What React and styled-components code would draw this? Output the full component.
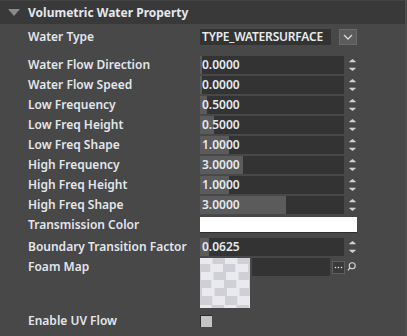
import React from "react";
import styled, { createGlobalStyle } from "styled-components";

const Global = createGlobalStyle`
  html, body { margin: 0; padding: 0; background: #484848; }
  body { font-family: "Noto Sans", "DejaVu Sans", sans-serif; }
`;

const Panel = styled.div`
  width: 407px;
  height: 336px;
  background: #484848;
  box-sizing: border-box;
  border-right: 2px solid #4e4e4e;
  overflow: hidden;
`;

const Header = styled.div`
  height: 24px;
  background: #393939;
  border-top: 1px solid #444;
  box-sizing: border-box;
  display: flex;
  align-items: center;
  gap: 8px;
  padding-left: 8px;
  padding-bottom: 1px;
  color: #e4e8ee;
  font-size: 12px;
  font-weight: 700;
`;

const Triangle = styled.span`
  width: 0;
  height: 0;
  border-left: 6px solid transparent;
  border-right: 6px solid transparent;
  border-top: 7px solid #8a8a8a;
`;

const Body = styled.div`
  display: flex;
  flex-direction: column;
  padding-top: 5px;
`;

const Row = styled.div`
  display: grid;
  grid-template-columns: 172px 1fr;
  grid-template-rows: ${(p) => p.$h}px;
  align-items: ${(p) => (p.$top ? "start" : "center")};
  padding-left: 28px;
  height: ${(p) => p.$h}px;
  margin-bottom: ${(p) => p.$mb || 0}px;
`;

const Label = styled.div`
  color: #e2e6ec;
  font-size: 12px;
  font-weight: 600;
  white-space: nowrap;
  line-height: ${(p) => (p.$top ? "17px" : "normal")};
  padding-bottom: ${(p) => (p.$top ? 0 : 2)}px;
`;

const Control = styled.div`
  display: flex;
  align-items: ${(p) => (p.$top ? "flex-start" : "center")};
`;

const Select = styled.div`
  width: 157px;
  height: 16px;
  display: flex;
  gap: 8px;
`;

const SelectText = styled.div`
  flex: 1;
  background: #333;
  color: #e6ebf2;
  font-size: 12px;
  font-weight: 600;
  letter-spacing: -0.2px;
  line-height: 16px;
  padding-left: 2px;
  white-space: nowrap;
  overflow: hidden;
`;

const SelectBtn = styled.div`
  width: 16px;
  height: 14px;
  background: #5c5c5c;
  border: 1px solid #6a6a6a;
  display: flex;
  align-items: center;
  justify-content: center;
`;

const NumField = styled.div`
  position: relative;
  width: 144px;
  height: 18px;
  background: #333;
  overflow: hidden;
`;

const Fill = styled.div`
  position: absolute;
  left: 0;
  top: 0;
  bottom: 0;
  background: #5b5b5b;
`;

const NumText = styled.span`
  position: relative;
  display: block;
  padding-left: 2px;
  color: #e3e9f0;
  font-size: 12px;
  font-weight: 600;
  line-height: 18px;
`;

const Spinner = styled.div`
  width: 17px;
  display: flex;
  justify-content: center;
`;

const ColorBox = styled.div`
  width: 157px;
  height: 15px;
  background: #fff;
  border-bottom: 1px solid #2e2e2e;
`;

const Thumb = styled.div`
  width: 50px;
  height: 50px;
  margin-right: 2px;
`;

const PathField = styled.div`
  width: 78px;
  height: 18px;
  background: #333;
  margin-right: 2px;
`;

const DotsBtn = styled.div`
  width: 11px;
  height: 11px;
  margin-top: 3px;
  background: #3a3a3a;
  border: 1px solid #5e5e5e;
  display: flex;
  align-items: center;
  justify-content: center;
`;

const SearchIcon = styled.div`
  width: 13px;
  display: flex;
  justify-content: center;
  margin-top: 4px;
`;

const Check = styled.div`
  width: 11px;
  height: 11px;
  background: #c4c4c4;
  border-top: 1px solid #2c2c2c;
  border-left: 1px solid #2c2c2c;
`;

const SpinIcon = () => (
  <svg width="7" height="12" viewBox="0 0 7 12">
    <polygon points="3.5,0 6,2 1,2" fill="#d0d0d0" />
    <rect x="0.5" y="2" width="6" height="1.3" fill="#d0d0d0" />
    <rect x="0.5" y="8.7" width="6" height="1.3" fill="#d0d0d0" />
    <polygon points="1,10 6,10 3.5,12" fill="#d0d0d0" />
  </svg>
);

const Checker = () => {
  const rects = [];
  const rowH = [6, 8, 8, 8, 8, 9, 9];
  let y = 0;
  rowH.forEach((h, r) => {
    const off = [0, -2, 1, -1, 2, 0, -1][r];
    for (let c = -1; c < 5; c++) {
      const x = c * 12.5 + off;
      rects.push(
        <rect
          key={r + "-" + c}
          x={x}
          y={y}
          width={12.5}
          height={h}
          fill={(r + c) % 2 === 0 ? "#e9e9ee" : "#cfd0d6"}
        />
      );
    }
    y += h;
  });
  return (
    <svg width="50" height="50" viewBox="0 0 50 50" style={{ display: "block" }}>
      <rect width="50" height="50" fill="#e6e6ea" />
      {rects}
    </svg>
  );
};

const numRows = [
  ["Water Flow Direction", "0.0000", 2],
  ["Water Flow Speed", "0.0000", 2],
  ["Low Frequency", "0.5000", 7],
  ["Low Freq Height", "0.5000", 14],
  ["Low Freq Shape", "1.0000", 29],
  ["High Frequency", "3.0000", 43],
  ["High Freq Height", "1.0000", 29],
  ["High Freq Shape", "3.0000", 86],
];

const NumberControl = ({ value, fill }) => (
  <Control>
    <NumField>
      <Fill style={{ width: fill }} />
      <NumText>{value}</NumText>
    </NumField>
    <Spinner>
      <SpinIcon />
    </Spinner>
  </Control>
);

export default function App() {
  return (
    <>
      <Global />
      <Panel>
        <Header>
          <Triangle />
          Volumetric Water Property
        </Header>
        <Body>
          <Row $h={16} $mb={11}>
            <Label>Water Type</Label>
            <Control>
              <Select>
                <SelectText>TYPE_WATERSURFACE</SelectText>
                <SelectBtn>
                  <svg width="10" height="6" viewBox="0 0 10 6">
                    <polyline points="1,1 5,5 9,1" fill="none" stroke="#d8d8d8" strokeWidth="1.3" />
                  </svg>
                </SelectBtn>
              </Select>
            </Control>
          </Row>
          {numRows.map(([label, value, fill]) => (
            <Row key={label} $h={18} $mb={2}>
              <Label>{label}</Label>
              <NumberControl value={value} fill={fill} />
            </Row>
          ))}
          <Row $h={18} $mb={4}>
            <Label>Transmission Color</Label>
            <Control>
              <ColorBox />
            </Control>
          </Row>
          <Row $h={18} $mb={2}>
            <Label>Boundary Transition Factor</Label>
            <NumberControl value="0.0625" fill={9} />
          </Row>
          <Row $h={50} $mb={7} $top>
            <Label $top>Foam Map</Label>
            <Control $top>
              <Thumb>
                <Checker />
              </Thumb>
              <PathField />
              <DotsBtn>
                <svg width="9" height="3" viewBox="0 0 9 3">
                  <circle cx="1.5" cy="1.5" r="0.8" fill="#e0e0e0" />
                  <circle cx="4.5" cy="1.5" r="0.8" fill="#e0e0e0" />
                  <circle cx="7.5" cy="1.5" r="0.8" fill="#e0e0e0" />
                </svg>
              </DotsBtn>
              <SearchIcon>
                <svg width="9" height="9" viewBox="0 0 9 9">
                  <circle cx="5.2" cy="3.8" r="3" fill="none" stroke="#d8d8d8" strokeWidth="1.1" />
                  <line x1="3" y1="6" x2="0.8" y2="8.3" stroke="#d8d8d8" strokeWidth="1.2" />
                </svg>
              </SearchIcon>
            </Control>
          </Row>
          <Row $h={12}>
            <Label>Enable UV Flow</Label>
            <Control>
              <Check />
            </Control>
          </Row>
        </Body>
      </Panel>
    </>
  );
}
